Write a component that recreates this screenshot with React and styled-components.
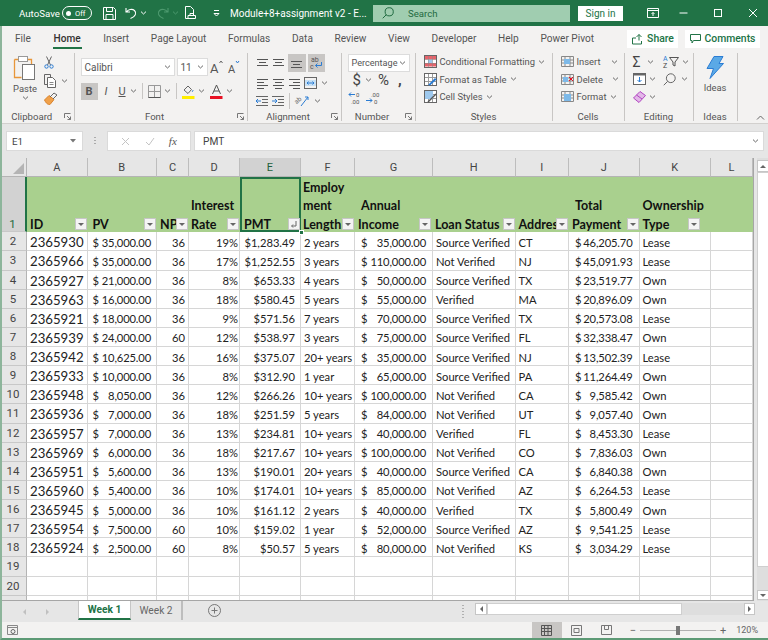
import styled, { createGlobalStyle } from "styled-components";

const Global = createGlobalStyle`
  html, body { margin: 0; padding: 0; background: #f3f2f1; }
  * { box-sizing: border-box; }
`;

const GREEN = "#217346";
const UI = `"Roboto", "Liberation Sans", sans-serif`;
const SHEET = `"Lato", "Liberation Sans", sans-serif`;

const Window = styled.div`
  width: 768px;
  height: 640px;
  overflow: hidden;
  display: flex;
  flex-direction: column;
  font-family: ${UI};
  color: #444;
  background: #f3f2f1;
`;
const TitleBar = styled.div`
  height: 26px;
  flex: none;
  background: ${GREEN};
  color: #fff;
  display: flex;
  align-items: center;
  font-size: 9.7px;
  padding-left: 19px;
`;
const Body = styled.div`
  flex: 1;
  min-height: 0;
  display: flex;
  flex-direction: column;
  border-left: 2px solid #8db59b;
  border-bottom: 2px solid #5d9a75;
`;
const AutoSave = styled.span`
  width: 43px;
`;
const Toggle = styled.div`
  width: 30px;
  height: 14px;
  border: 1px solid #fff;
  border-radius: 7px;
  display: flex;
  align-items: center;
  gap: 4px;
  padding-left: 3px;
  font-size: 7.5px;
  margin-right: 11px;
  &::before {
    content: "";
    width: 5px;
    height: 5px;
    border-radius: 50%;
    background: #fff;
  }
`;
const Quick = styled.div`
  display: flex;
  align-items: center;
  gap: ${(p) => p.$gap || 3}px;
  margin-right: ${(p) => p.$after || 0}px;
`;
const DocTitle = styled.span`
  width: 143px;
  white-space: nowrap;
  font-size: 10px;
`;
const SearchBox = styled.div`
  width: 197px;
  height: 17px;
  background: #a0cdb0;
  display: flex;
  align-items: center;
  gap: 14px;
  padding-left: 9px;
  color: #1f6a40;
  font-size: 9.6px;
  margin-right: 8px;
`;
const SignIn = styled.div`
  width: 45px;
  height: 15px;
  background: #fff;
  color: ${GREEN};
  font-size: 10px;
  display: flex;
  align-items: center;
  justify-content: center;
  margin-right: 24px;
`;
const WinControls = styled.div`
  display: flex;
  align-items: center;
  gap: 20px;
`;

const TabRow = styled.div`
  height: 25px;
  flex: none;
  display: flex;
  align-items: center;
  padding-left: 13px;
  gap: 21.7px;
  font-size: 10.1px;
  color: #555;
`;
const RibbonTab = styled.div`
  height: 25px;
  display: flex;
  align-items: center;
  white-space: nowrap;
  position: relative;
  ${(p) =>
    p.$active &&
    `color: #333; font-weight: 500; padding: 0 1px;
     &::after { content: ""; position: absolute; left: 0; right: 0; bottom: 2px; height: 2px; background: ${GREEN}; }`}
`;
const TabActions = styled.div`
  margin-left: auto;
  display: flex;
  gap: 7px;
  padding-right: 8px;
`;
const ActionBtn = styled.div`
  height: 18px;
  width: ${(p) => p.$w}px;
  background: #fff;
  color: ${GREEN};
  font-weight: 500;
  font-size: 10.4px;
  display: flex;
  align-items: center;
  justify-content: center;
  gap: 4px;
`;

const Ribbon = styled.div`
  height: 73px;
  flex: none;
  display: flex;
  border-bottom: 1px solid #d2d0ce;
  padding-top: 2px;
`;
const Group = styled.div`
  width: ${(p) => p.$w}px;
  flex: none;
  height: 68px;
  border-right: 1px solid #c8c6c4;
  display: flex;
  flex-direction: column;
`;
const GroupBody = styled.div`
  flex: 1;
  min-height: 0;
  padding-left: ${(p) => p.$pl || 0}px;
  display: flex;
  gap: ${(p) => p.$gap || 0}px;
`;
const GroupLabel = styled.div`
  height: 10px;
  display: grid;
  grid-template-columns: 1fr auto 1fr;
  align-items: center;
  font-size: 9.6px;
  color: #555;
  padding-right: ${(p) => (p.$launch ? 12 : 0)}px;
  & > span:nth-child(2) {
    white-space: nowrap;
  }
  & > svg {
    justify-self: end;
    margin-right: -9px;
  }
`;
const Stack = styled.div`
  display: flex;
  flex-direction: column;
  align-items: ${(p) => p.$items || "flex-start"};
  padding-top: ${(p) => p.$pt || 0}px;
  gap: ${(p) => p.$gap || 0}px;
  width: ${(p) => (p.$w ? `${p.$w}px` : "auto")};
`;
const CollapseSlot = styled.div`
  margin-left: 18px;
  padding-top: 62px;
`;
const IconRow = styled.div`
  display: flex;
  align-items: center;
  height: ${(p) => p.$h || 18}px;
  gap: ${(p) => p.$gap || 0}px;
`;
const RibbonText = styled.span`
  font-size: 9.4px;
  color: #555;
  white-space: nowrap;
`;
const Select = styled.div`
  width: ${(p) => p.$w}px;
  height: 18px;
  background: #fff;
  border: 1px solid #dcdcdc;
  display: flex;
  align-items: center;
  justify-content: space-between;
  padding: 0 3px;
  font-size: ${(p) => p.$size || 10}px;
  color: #555;
  white-space: nowrap;
`;
const ToolBtn = styled.div`
  width: ${(p) => p.$w || 17}px;
  height: ${(p) => p.$h || 17}px;
  display: flex;
  align-items: center;
  justify-content: center;
  flex: none;
  color: #555;
  background: ${(p) => (p.$on ? "#c8c6c4" : "transparent")};
`;
const Letter = styled.span`
  font-family: ${UI};
  font-size: 11px;
  font-weight: ${(p) => (p.$bold ? 700 : 400)};
  font-style: ${(p) => (p.$italic ? "italic" : "normal")};
  text-decoration: ${(p) => (p.$under ? "underline" : "none")};
  color: #555;
`;
const Sep = styled.div`
  width: 1px;
  height: 16px;
  background: #c8c6c4;
  margin: 0 ${(p) => (p.$m === undefined ? 5 : p.$m)}px;
`;
const Symbol = styled.span`
  font-size: ${(p) => p.$size || 15}px;
  font-weight: ${(p) => p.$weight || 400};
  margin-left: ${(p) => p.$ml || 0}px;
  color: #444;
  font-family: ${UI};
`;
const MenuItem = styled.div`
  display: flex;
  align-items: center;
  height: 17.5px;
  gap: 3px;
`;

const FormulaArea = styled.div`
  height: 34px;
  flex: none;
  background: #e6e6e6;
  display: flex;
  align-items: flex-start;
  padding: 7px 4px 0 4px;
`;
const NameBox = styled.div`
  width: 77px;
  height: 20px;
  background: #fff;
  border: 1px solid #dadada;
  display: flex;
  align-items: center;
  justify-content: space-between;
  padding: 0 6px 0 5px;
  font-size: 9.8px;
  color: #444;
`;
const GripDots = styled.div`
  width: 24px;
  height: 20px;
  display: flex;
  align-items: center;
  justify-content: center;
  &::before {
    content: "";
    width: 2px;
    height: 8px;
    background: repeating-linear-gradient(#aaa 0 1px, transparent 1px 3px);
  }
`;
const FxBox = styled.div`
  width: 84px;
  height: 20px;
  background: #fff;
  border: 1px solid #dadada;
  display: flex;
  align-items: center;
  justify-content: space-around;
  padding: 0 6px;
  margin-right: 3px;
`;
const FxText = styled.span`
  font-family: "Liberation Serif", serif;
  font-style: italic;
  font-size: 11px;
  color: #555;
`;
const FormulaInput = styled.div`
  flex: 1;
  height: 20px;
  background: #fff;
  border: 1px solid #dadada;
  display: flex;
  align-items: center;
  justify-content: space-between;
  padding: 0 4px 0 8px;
  font-size: 10.2px;
  color: #444;
`;

const SheetArea = styled.div`
  height: 443px;
  flex: none;
  display: flex;
  background: #e6e6e6;
`;
const SheetClip = styled.div`
  width: 752px;
  height: 443px;
  overflow: hidden;
  flex: none;
  background: #fff;
  border-right: 1px solid #a6a6a6;
  border-bottom: 1px solid #a6a6a6;
`;
const Grid = styled.div`
  display: grid;
  grid-template-columns: 25px 60.5px 69.5px 32px 51px 61px 54px 78px 82.5px 53.5px 70.5px 71.5px 42px;
  grid-template-rows: 19px 55.3px repeat(20, 19.125px);
  font-family: ${SHEET};
  font-size: 11.2px;
  color: #222;
`;
const Corner = styled.div`
  background: #e6e6e6;
  border-right: 1px solid #b4b4b4;
  border-bottom: 1px solid #b4b4b4;
  display: flex;
  align-items: flex-end;
  justify-content: flex-end;
  padding: 0 2px 2px 0;
  &::before {
    content: "";
    border-style: solid;
    border-width: 0 0 11px 11px;
    border-color: transparent transparent #b4b4b4 transparent;
  }
`;
const ColHead = styled.div`
  background: ${(p) => (p.$on ? "#d2d2d2" : "#e6e6e6")};
  border-right: 1px solid #bdbdbd;
  border-bottom: 1px solid #b4b4b4;
  color: ${(p) => (p.$on ? "#1e5f3b" : "#444")};
  display: flex;
  align-items: center;
  justify-content: center;
  font-family: ${UI};
  font-size: 11px;
`;
const RowHead = styled.div`
  background: ${(p) => (p.$on ? "#d2d2d2" : "#e6e6e6")};
  border-right: ${(p) => (p.$on ? `2px solid ${GREEN}` : "1px solid #b4b4b4")};
  border-bottom: 1px solid #c8c8c8;
  color: ${(p) => (p.$on ? "#1e6a40" : "#444")};
  display: flex;
  align-items: ${(p) => (p.$on ? "flex-end" : "center")};
  justify-content: center;
  padding-right: 2px;
  font-family: ${UI};
  font-size: 11.5px;
`;
const HeadCell = styled.div`
  background: #a9d08e;
  position: relative;
  display: flex;
  flex-direction: column;
  justify-content: flex-end;
  padding-left: ${(p) => (p.$pl === undefined ? 3 : p.$pl)}px;
  font-weight: 700;
  font-size: 12.5px;
  line-height: 18.4px;
  color: #111;
  overflow: hidden;
  white-space: nowrap;
  ${(p) => p.$selected && `box-shadow: inset 0 0 0 2px ${GREEN};`}
`;
const HeadLine = styled.span`
  padding-left: ${(p) => (p.$indent ? 3 : 0)}px;
  transform: translateY(2px);
`;
const FillHandle = styled.span`
  position: absolute;
  right: -3px;
  bottom: -3px;
  width: 5px;
  height: 5px;
  background: ${GREEN};
  border: 1px solid #fff;
  z-index: 2;
`;
const HeadWrap = styled.div`
  position: relative;
  display: grid;
`;
const FilterBtn = styled.span`
  position: absolute;
  right: ${(p) => p.$r || 1}px;
  bottom: 2px;
  width: 12px;
  height: 12px;
  background: #f4f4f4;
  border: 1px solid #c6c6c6;
  display: flex;
  align-items: center;
  justify-content: center;
`;
const Cell = styled.div`
  border-right: 1px solid #d6d6d6;
  border-bottom: 1px solid #d6d6d6;
  display: flex;
  align-items: center;
  white-space: nowrap;
  padding: ${(p) => (p.$pad ? `2px ${p.$pad} 0` : "2px 3px 0")};
  justify-content: ${(p) =>
    p.$kind === "num" ? "flex-end" : p.$kind === "money" ? "space-between" : "flex-start"};
  font-size: ${(p) => (p.$kind === "id" ? 13.2 : 11.2)}px;
`;
const Amount = styled.span`
  letter-spacing: -0.15px;
`;

const VScroll = styled.div`
  width: 12px;
  margin-left: 3px;
  flex: none;
  display: flex;
  flex-direction: column;
  background: #dedede;
`;
const ScrollBtn = styled.div`
  height: ${(p) => p.$h || 11}px;
  width: ${(p) => p.$w || "100%"};
  background: #fff;
  border: 1px solid #c6c6c6;
  flex: none;
  display: flex;
  align-items: center;
  justify-content: center;
  margin-top: ${(p) => p.$mt || 0}px;
  margin-left: ${(p) => (p.$end ? "auto" : 0)};
`;
const VThumb = styled.div`
  height: 395px;
  background: #fff;
  border: 1px solid #cfcfcf;
`;

const SheetBar = styled.div`
  height: 21px;
  flex: none;
  background: #e6e6e6;
  display: flex;
  align-items: flex-start;
`;
const SheetNav = styled.div`
  width: 76px;
  height: 21px;
  display: flex;
  align-items: center;
  gap: 18px;
  padding-left: 20px;
`;
const SheetTab = styled.div`
  width: ${(p) => p.$w}px;
  height: 19px;
  font-size: 10.2px;
  display: flex;
  align-items: center;
  justify-content: center;
  color: ${(p) => (p.$active ? GREEN : "#666")};
  font-weight: ${(p) => (p.$active ? 700 : 400)};
  background: ${(p) => (p.$active ? "#fff" : "transparent")};
  border-left: ${(p) => (p.$active ? "1px solid #c6c6c6" : "none")};
  border-right: ${(p) => (p.$active ? "1px solid #c6c6c6" : "2px solid #bdbdbd")};
  border-bottom: ${(p) => (p.$active ? `2px solid ${GREEN}` : "none")};
`;
const AddSheet = styled.div`
  margin: 3px 0 0 25px;
  display: flex;
`;
const HDots = styled.div`
  margin: 4px 0 0 auto;
  width: 2px;
  height: 13px;
  background: repeating-linear-gradient(#b0b0b0 0 1px, transparent 1px 3px);
`;
const HScroll = styled.div`
  margin: 2px 13px 0 11px;
  width: 280px;
  height: 12px;
  display: flex;
  background: #dedede;
`;
const HThumb = styled.div`
  width: 195px;
  background: #fff;
  border: 1px solid #cfcfcf;
`;
const StatusBar = styled.div`
  height: 16px;
  flex: none;
  background: #f3f2f1;
  display: flex;
  align-items: center;
  padding-left: 5px;
`;
const ViewBtns = styled.div`
  margin-left: auto;
  display: flex;
  align-items: center;
  height: 16px;
`;
const ViewBtn = styled.div`
  width: 30px;
  height: 16px;
  display: flex;
  align-items: center;
  justify-content: center;
  background: ${(p) => (p.$on ? "#c8c6c4" : "transparent")};
`;
const Zoomer = styled.div`
  display: flex;
  align-items: center;
  gap: 4px;
  margin-left: 8px;
  color: #666;
  font-size: 11px;
`;
const SliderTrack = styled.div`
  width: 76px;
  height: 1px;
  background: #b0b0b0;
  display: flex;
  justify-content: center;
  align-items: center;
  &::before {
    content: "";
    width: 4px;
    height: 9px;
    background: #777;
  }
`;
const ZoomText = styled.span`
  font-size: 9px;
  color: #666;
  margin: 0 10px 0 6px;
`;
const IconSvg = styled.svg`
  display: block;
  flex: none;
  overflow: visible;
  margin-left: ${(p) => p.$ml || 0}px;
`;

/* little drawings */
const Svg = ({ w = 12, h = 12, ml = 0, children }) => (
  <IconSvg width={w} height={h} viewBox={`0 0 ${w} ${h}`} fill="none" $ml={ml}>
    {children}
  </IconSvg>
);
const Caret = ({ c = "#666", ml = 0 }) => (
  <Svg w={7} h={4} ml={ml}>
    <path d="M1 .6 3.5 3 6 .6" stroke={c} />
  </Svg>
);
const Launcher = () => (
  <Svg w={7} h={7}>
    <path d="M.5 5V.5H6.5M6.5 6.5 3 3M6.5 3.5v3h-3" stroke="#777" />
  </Svg>
);
const Lines = ({ ys, xs, c = "#555" }) => (
  <Svg w={14} h={12}>
    {ys.map((y, i) => (
      <path key={i} d={`M${xs[i][0]} ${y}.5H${xs[i][1]}`} stroke={c} />
    ))}
  </Svg>
);
const PasteIcon = () => (
  <Svg w={24} h={26}>
    <path d="M1.5 4.5h4M14.5 4.5h4v5M1.5 4.5v18h7" stroke="#e8963a" strokeWidth="1.3" />
    <rect x="5.5" y="1.5" width="9" height="5" fill="#fff" stroke="#999" />
    <rect x="9.5" y="9.5" width="12" height="15" fill="#fff" stroke="#777" />
  </Svg>
);
const CutIcon = () => (
  <Svg w={10} h={13}>
    <path d="M2.5 .5 6.5 9M7.5 .5 3.5 9" stroke="#666" />
    <circle cx="2.5" cy="10.5" r="1.7" stroke="#2b7cd3" />
    <circle cx="7.5" cy="10.5" r="1.7" stroke="#2b7cd3" />
  </Svg>
);
const CopyIcon = () => (
  <Svg w={13} h={14}>
    <path d="M3.5 10.5h-3v-10h6v3" stroke="#666" />
    <path d="M3.5 3.5h5l3 3v7h-8z" fill="#fff" stroke="#666" />
    <path d="M5.5 8.5h4M5.5 10.5h4" stroke="#888" />
  </Svg>
);
const BrushIcon = () => (
  <Svg w={14} h={13}>
    <path d="M.5 8 5 3.5l5 4L6 12.5c-2 0-3.5-.5-5.5-4.500z" fill="#f0a14a" stroke="#d9822b" />
    <path d="m6 5 4-4 3 2-4 4" stroke="#666" />
  </Svg>
);
const GrowA = ({ up }) => (
  <Svg w={13} h={14}>
    <text x="0" y="13" fontSize={up ? 13 : 11} fill="#555" fontFamily="Roboto">A</text>
    <path d={up ? "M9.500 3 11 1l1.500 2" : "M8 1l1.500 2L11 1"} stroke={up ? "#666" : "#2b7cd3"} />
  </Svg>
);
const BordersIcon = () => (
  <Svg w={13} h={13}>
    <path d="M.5.5h12v12H.5zM6.500.5v12M.5 6.500h12" stroke="#999" />
    <path d="M.5 12.500h12" stroke="#555" />
  </Svg>
);
const FillIcon = () => (
  <Svg w={13} h={15}>
    <path d="m2 6 4-4 3.500 3.500-3.500 4z" stroke="#666" />
    <path d="M11 6c0 1-1 2-1 2" stroke="#2b7cd3" />
    <rect x="0" y="12" width="12.500" height="3" fill="#ffee00" />
  </Svg>
);
const ColorIcon = () => (
  <Svg w={13} h={15}>
    <path d="m2.500 10 4-9 4 9M4 7h5" stroke="#555" />
    <rect x="0" y="12" width="12.500" height="3" fill="#e81123" />
  </Svg>
);
const WrapIcon = () => (
  <Svg w={14} h={14}>
    <text x="2" y="6" fontSize="7" fill="#555" fontFamily="Roboto">ab</text>
    <text x="1" y="13" fontSize="7" fill="#555" fontFamily="Roboto">c</text>
    <path d="M12.500 6v3.500H6.500M8.500 7.500 6.500 9.500l2 2" stroke="#2b7cd3" />
  </Svg>
);
const MergeIcon = () => (
  <Svg w={13} h={12}>
    <rect x=".5" y=".5" width="12" height="11" stroke="#666" />
    <rect x="1" y="3" width="11" height="6" fill="#c7e0f4" />
    <path d="M3 6h7M3 6l1.500-1.500M3 6l1.500 1.500M10 6 8.500 4.500M10 6 8.500 7.500" stroke="#2b7cd3" />
  </Svg>
);
const IndentIcon = ({ flip }) => (
  <Svg w={12} h={10}>
    <path d="M0 .5h12M6 3.500h6M6 6.500h6M0 9.500h12" stroke="#666" />
    <path d={flip ? "M0 5h5M3 3l2 2-2 2" : "M0 5h5M2 3 0 5l2 2"} stroke="#2b7cd3" />
  </Svg>
);
const OrientIcon = () => (
  <Svg w={15} h={13}>
    <text x="0" y="8" fontSize="6.5" fill="#666" fontFamily="Roboto" transform="rotate(-40 4 7)">ab</text>
    <path d="M6 12 13 3M10 3h3v3" stroke="#2b7cd3" />
  </Svg>
);
const DecIcon = ({ more }) => (
  <Svg w={13} h={13}>
    {more ? (
      <>
        <text x="5" y="5.5" fontSize="6" fill="#555" fontFamily="Roboto">.00</text>
        <text x="8" y="12.5" fontSize="6" fill="#555" fontFamily="Roboto">0</text>
        <path d="M0 9.500h6M4 7.500l2 2-2 2" stroke="#2b7cd3" />
      </>
    ) : (
      <>
        <text x="8" y="5.5" fontSize="6" fill="#555" fontFamily="Roboto">0</text>
        <text x="3" y="12.5" fontSize="6" fill="#555" fontFamily="Roboto">.00</text>
        <path d="M1 3.500h6M3 1.500l-2 2 2 2" stroke="#2b7cd3" />
      </>
    )}
  </Svg>
);
const TableIcon = ({ variant }) => (
  <Svg w={13} h={13}>
    <rect x=".5" y=".5" width="12" height="12" fill="#fff" stroke="#666" />
    {variant === "cond" && (
      <>
        <rect x="1" y="1" width="11" height="3.5" fill="#e8636b" />
        <rect x="1" y="8" width="11" height="3.5" fill="#e8636b" />
        <rect x="4" y="4.5" width="4.5" height="3.5" fill="#9ec9ee" />
        <path d="M4.500 1v11M8.500 1v11M1 4.500h11M1 8.500h11" stroke="#888" strokeWidth=".5" />
      </>
    )}
    {variant !== "cond" && <path d="M1 4.500h11M1 8.500h11M4.500 1v11M8.500 1v11" stroke="#9a9a9a" />}
    {variant === "fmt" && <path d="m4 12 7-7 1.500 1.500L6 12.500z" fill="#2b7cd3" />}
    {variant === "style" && <path d="M1 1h8v8H1z" fill="#9ec9ee" />}
    {variant === "style" && <path d="m4 12 8-8" stroke="#555" strokeWidth="1.5" />}
  </Svg>
);
const CellOpIcon = ({ op }) => (
  <Svg w={13} h={13}>
    <path d="M.5 1.500h12v10H.5zM.5 5h12M.5 8h12M4 1.500v10M9 1.500v10" stroke="#888" />
    {op === "insert" && <rect x="3" y="4" width="6" height="5" fill="#7db9e8" />}
    {op === "delete" && (
      <>
        <rect x="2" y="4" width="5" height="5" fill="#7db9e8" />
        <path d="m8 4 4 4M12 4 8 8" stroke="#e81123" />
      </>
    )}
    {op === "format" && <rect x="3" y="4" width="7" height="7" fill="#7db9e8" />}
  </Svg>
);
const SortIcon = () => (
  <Svg w={16} h={13}>
    <text x="0" y="6" fontSize="7" fill="#2b7cd3" fontFamily="Roboto">A</text>
    <text x="0" y="13" fontSize="7" fill="#444" fontFamily="Roboto">Z</text>
    <path d="M6.500 2.500h9l-3.500 4.500v4l-2-1V7z" stroke="#555" />
  </Svg>
);
const DownFill = () => (
  <Svg w={13} h={12}>
    <rect x=".5" y=".5" width="12" height="11" fill="#fff" stroke="#666" />
    <path d="M1 1.500h11" stroke="#666" strokeWidth="2" />
    <path d="M6.500 4v5M4.500 7l2 2 2-2" stroke="#2b7cd3" />
  </Svg>
);
const Magnifier = ({ c = "#666", s = 13 }) => (
  <Svg w={s} h={s}>
    <circle cx={s * 0.6} cy={s * 0.4} r={s * 0.34} stroke={c} />
    <path d={`M${s * 0.36} ${s * 0.64}l-${s * 0.3} ${s * 0.3}`} stroke={c} />
  </Svg>
);
const Eraser = () => (
  <Svg w={13} h={12}>
    <path d="M.5 7 7 .5l5.500 4L6 11.500z" fill="#e3b7e8" stroke="#b146c2" />
    <path d="M3.500 4 9 8" stroke="#b146c2" />
  </Svg>
);
const Bolt = () => (
  <Svg w={18} h={23}>
    <path d="M8 .5h9l-4 7h4.500L4 22.500l3.500-10H1z" fill="#5aa9e6" stroke="#2b7cd3" />
  </Svg>
);
const ChevronUp = () => (
  <Svg w={9} h={5}>
    <path d="M1 4.500 4.500 1 8 4.500" stroke="#666" />
  </Svg>
);
const ShareIcon = () => (
  <Svg w={12} h={12}>
    <path d="M8 1.500v6M5.500 4 8 1.500 10.500 4M5 5H1.500v6h9V8" stroke="#217346" />
  </Svg>
);
const CommentIcon = () => (
  <Svg w={11} h={10}>
    <path d="M.5.500h10v6h-7L2 9V6.500H.5z" stroke="#217346" />
  </Svg>
);

const tabs = ["File", "Home", "Insert", "Page Layout", "Formulas", "Data", "Review", "View", "Developer", "Help", "Power Pivot"];
const cols = ["A", "B", "C", "D", "E", "F", "G", "H", "I", "J", "K", "L"];
const heads = [
  { lines: ["ID"] },
  { lines: ["PV"], pl: 5 },
  { lines: ["NP"], pl: 3 },
  { lines: ["Interest", "Rate"], pl: 2 },
  { lines: ["PMT"], pl: 4, sel: true },
  { lines: ["Employ", "ment", "Length"], pl: 2 },
  { lines: ["Annual", "Income"], pl: 3, r: 2, indent: "Annual" },
  { lines: ["Loan Status"], pl: 2 },
  { lines: ["Address"], pl: 3 },
  { lines: ["Total", "Payment"], pl: 3, indent: "Total" },
  { lines: ["Ownership", "Type"], pl: 3, r: 11 },
  { empty: true },
];
const rows = [
  ["2365930", "35,000.00", 36, "19%", "1,283.49", "2 years", "35,000.00", "Source Verified", "CT", "46,205.70", "Lease"],
  ["2365966", "35,000.00", 36, "17%", "1,252.55", "3 years", "110,000.00", "Not Verified", "NJ", "45,091.93", "Lease"],
  ["2365927", "21,000.00", 36, "8%", "653.33", "4 years", "50,000.00", "Source Verified", "TX", "23,519.77", "Own"],
  ["2365963", "16,000.00", 36, "18%", "580.45", "5 years", "55,000.00", "Verified", "MA", "20,896.09", "Own"],
  ["2365921", "18,000.00", 36, "9%", "571.56", "7 years", "70,000.00", "Source Verified", "TX", "20,573.08", "Lease"],
  ["2365939", "24,000.00", 60, "12%", "538.97", "3 years", "75,000.00", "Source Verified", "FL", "32,338.47", "Own"],
  ["2365942", "10,625.00", 36, "16%", "375.07", "20+ years", "35,000.00", "Source Verified", "NJ", "13,502.39", "Lease"],
  ["2365933", "10,000.00", 36, "8%", "312.90", "1 year", "65,000.00", "Source Verified", "PA", "11,264.49", "Own"],
  ["2365948", "8,050.00", 36, "12%", "266.26", "10+ years", "100,000.00", "Not Verified", "CA", "9,585.42", "Own"],
  ["2365936", "7,000.00", 36, "18%", "251.59", "5 years", "84,000.00", "Not Verified", "UT", "9,057.40", "Own"],
  ["2365957", "7,000.00", 36, "13%", "234.81", "10+ years", "40,000.00", "Verified", "FL", "8,453.30", "Lease"],
  ["2365969", "6,000.00", 36, "18%", "217.67", "10+ years", "100,000.00", "Not Verified", "CO", "7,836.03", "Own"],
  ["2365951", "5,600.00", 36, "13%", "190.01", "20+ years", "40,000.00", "Source Verified", "CA", "6,840.38", "Own"],
  ["2365960", "5,400.00", 36, "10%", "174.01", "10+ years", "85,000.00", "Not Verified", "AZ", "6,264.53", "Lease"],
  ["2365945", "5,000.00", 36, "10%", "161.12", "2 years", "40,000.00", "Verified", "TX", "5,800.49", "Own"],
  ["2365954", "7,500.00", 60, "10%", "159.02", "1 year", "52,000.00", "Source Verified", "AZ", "9,541.25", "Lease"],
  ["2365924", "2,500.00", 60, "8%", "50.57", "5 years", "80,000.00", "Not Verified", "KS", "3,034.29", "Lease"],
];

const DataRow = ({ n, r }) => (
  <>
    <RowHead>{n}</RowHead>
    <Cell $kind="id">{r[0]}</Cell>
    <Cell $kind="money" $pad="5px">
      <span>$</span>
      <Amount>{r[1]}</Amount>
    </Cell>
    <Cell $kind="num">{r[2]}</Cell>
    <Cell $kind="num" $pad="1px">{r[3]}</Cell>
    <Cell $kind="num" $pad="5px">${r[4]}</Cell>
    <Cell>{r[5]}</Cell>
    <Cell $kind="money" $pad="6px">
      <span>$</span>
      <Amount>{r[6]}</Amount>
    </Cell>
    <Cell>{r[7]}</Cell>
    <Cell>{r[8]}</Cell>
    <Cell $kind="money" $pad="6px">
      <span>$</span>
      <Amount>{r[9]}</Amount>
    </Cell>
    <Cell>{r[10]}</Cell>
    <Cell />
  </>
);

const EmptyRow = ({ n }) => (
  <>
    <RowHead>{n}</RowHead>
    {cols.map((c) => (
      <Cell key={c} />
    ))}
  </>
);

export default function App() {
  return (
    <Window>
      <Global />
      <TitleBar>
        <AutoSave>AutoSave</AutoSave>
        <Toggle>Off</Toggle>
        <Quick $after={9}>
          <Svg w={13} h={13}>
            <path d="M.5.5h10l2 2v10H.5z" stroke="#fff" />
            <path d="M3.500.5v4h6v-4M3 12.500v-5h7v5" stroke="#fff" />
          </Svg>
        </Quick>
        <Quick $after={10}>
          <Svg w={12} h={12}>
            <path d="M1 1v4h4M1.500 5C3 2.500 7 1.500 9.500 3.500c2.500 2.500 1 6-4 8" stroke="#fff" strokeWidth="1.1" />
          </Svg>
          <Caret c="#fff" />
        </Quick>
        <Quick $after={6}>
          <Svg w={12} h={12}>
            <path d="M11 1v4H7M10.500 5C9 2.500 5 1.500 2.500 3.500c-2.500 2.500-1 6 4 8" stroke="#4d9a6f" strokeWidth="1.1" />
          </Svg>
          <Caret c="#4d9a6f" />
        </Quick>
        <Quick $after={17}>
          <Svg w={11} h={14}>
            <path d="M.5.500h5l3 3V8M.5.500v12h3M3 9.500h7.500v3H3zM5 9.500v-2h3.500v2" stroke="#fff" />
          </Svg>
        </Quick>
        <Quick $after={10}>
          <Svg w={7} h={7}>
            <path d="M1 .5h5M1 3.500h5l-2.500 2.500z" stroke="#fff" />
          </Svg>
        </Quick>
        <DocTitle>Module+8+assignment v2 - E...</DocTitle>
        <SearchBox>
          <Magnifier c="#1f6a40" s={12} />
          <span>Search</span>
        </SearchBox>
        <SignIn>Sign in</SignIn>
        <WinControls>
          <Svg w={12} h={10}>
            <path d="M.5.500h11v9H.5zM.5 2.500h11M6 8V4.500M4.500 6 6 4.500 7.500 6" stroke="#fff" />
          </Svg>
          <Svg w={9} h={10}>
            <path d="M.5 5h8" stroke="#fff" />
          </Svg>
          <Svg w={14} h={10} ml={3}>
            <rect x="3.5" y="1.5" width="7" height="7" stroke="#fff" />
          </Svg>
          <Svg w={10} h={10} ml={3}>
            <path d="m1 1 8 8M9 1 1 9" stroke="#fff" />
          </Svg>
        </WinControls>
      </TitleBar>
      <Body>
        <TabRow>
          {tabs.map((t) => (
            <RibbonTab key={t} $active={t === "Home"}>
              {t}
            </RibbonTab>
          ))}
          <TabActions>
            <ActionBtn $w={51}>
              <ShareIcon />
              Share
            </ActionBtn>
            <ActionBtn $w={75}>
              <CommentIcon />
              Comments
            </ActionBtn>
          </TabActions>
        </TabRow>
        <Ribbon>
          <Group $w={72.5}>
            <GroupBody $pl={10} $gap={6}>
              <Stack $items="center" $gap={2} $pt={2} $w={26}>
                <PasteIcon />
                <RibbonText>Paste</RibbonText>
                <Caret />
              </Stack>
              <Stack>
                <IconRow $h={18}>
                  <CutIcon />
                </IconRow>
                <IconRow $h={19} $gap={4}>
                  <CopyIcon />
                  <Caret />
                </IconRow>
                <IconRow $h={17}>
                  <BrushIcon />
                </IconRow>
              </Stack>
            </GroupBody>
            <GroupLabel $launch>
              <span />
              <span>Clipboard</span>
              <Launcher />
            </GroupLabel>
          </Group>
          <Group $w={173}>
            <GroupBody $pl={6}>
              <Stack $gap={6} $pt={5}>
                <IconRow $gap={2}>
                  <Select $w={94}>
                    Calibri
                    <Caret />
                  </Select>
                  <Select $w={31}>
                    11
                    <Caret />
                  </Select>
                  <IconRow $gap={5}>
                    <GrowA up />
                    <GrowA />
                  </IconRow>
                </IconRow>
                <IconRow>
                  <ToolBtn $on>
                    <Letter $bold>B</Letter>
                  </ToolBtn>
                  <ToolBtn>
                    <Letter $italic>I</Letter>
                  </ToolBtn>
                  <ToolBtn $w={15}>
                    <Letter $under>U</Letter>
                  </ToolBtn>
                  <Caret />
                  <Sep />
                  <BordersIcon />
                  <Caret ml={3} />
                  <Sep />
                  <FillIcon />
                  <Caret ml={3} />
                  <Svg w={5} h={2} />
                  <ColorIcon />
                  <Caret ml={3} />
                </IconRow>
              </Stack>
            </GroupBody>
            <GroupLabel $launch>
              <span />
              <span>Font</span>
              <Launcher />
            </GroupLabel>
          </Group>
          <Group $w={94}>
            <GroupBody $pl={8}>
              <Stack>
                <IconRow $gap={2} $h={20}>
                  <Lines ys={[2, 5, 8]} xs={[[1, 12], [3, 10], [1, 12]]} />
                  <Lines ys={[2, 5, 8]} xs={[[1, 12], [3, 10], [1, 12]]} />
                  <ToolBtn $on $w={18} $h={18}>
                    <Lines ys={[4, 7, 10]} xs={[[1, 12], [3, 10], [1, 12]]} />
                  </ToolBtn>
                  <ToolBtn $on $w={17} $h={18}>
                    <WrapIcon />
                  </ToolBtn>
                </IconRow>
                <IconRow $gap={2} $h={19}>
                  <Lines ys={[2, 5, 8, 11]} xs={[[1, 12], [1, 8], [1, 12], [1, 8]]} />
                  <Lines ys={[2, 5, 8, 11]} xs={[[1, 12], [3, 10], [1, 12], [3, 10]]} />
                  <Lines ys={[2, 5, 8, 11]} xs={[[1, 12], [5, 12], [1, 12], [5, 12]]} />
                  <MergeIcon />
                  <Caret ml={2} />
                </IconRow>
                <IconRow $gap={4} $h={17}>
                  <IndentIcon />
                  <IndentIcon flip />
                  <Sep $m={1} />
                  <OrientIcon />
                  <Caret />
                </IconRow>
              </Stack>
            </GroupBody>
            <GroupLabel $launch>
              <span />
              <span>Alignment</span>
              <Launcher />
            </GroupLabel>
          </Group>
          <Group $w={74}>
            <GroupBody $pl={6}>
              <Stack $pt={1}>
                <Select $w={62} $size={9.1}>
                  Percentage
                  <Caret />
                </Select>
                <IconRow $h={15} $gap={4}>
                  <Symbol $ml={5}>$</Symbol>
                  <Caret />
                  <Symbol $ml={2}>%</Symbol>
                  <Symbol $ml={5} $weight={700}>,</Symbol>
                </IconRow>
                <IconRow $h={20} $gap={5}>
                  <DecIcon />
                  <DecIcon more />
                </IconRow>
              </Stack>
            </GroupBody>
            <GroupLabel $launch>
              <span />
              <span>Number</span>
              <Launcher />
            </GroupLabel>
          </Group>
          <Group $w={137}>
            <GroupBody $pl={8}>
              <Stack>
                <MenuItem>
                  <TableIcon variant="cond" />
                  <RibbonText>Conditional Formatting</RibbonText>
                  <Caret />
                </MenuItem>
                <MenuItem>
                  <TableIcon variant="fmt" />
                  <RibbonText>Format as Table</RibbonText>
                  <Caret />
                </MenuItem>
                <MenuItem>
                  <TableIcon variant="style" />
                  <RibbonText>Cell Styles</RibbonText>
                  <Caret />
                </MenuItem>
              </Stack>
            </GroupBody>
            <GroupLabel>
              <span />
              <span>Styles</span>
              <span />
            </GroupLabel>
          </Group>
          <Group $w={72}>
            <GroupBody $pl={8}>
              <Stack>
                <MenuItem>
                  <CellOpIcon op="insert" />
                  <RibbonText>Insert</RibbonText>
                  <Caret ml={7} />
                </MenuItem>
                <MenuItem>
                  <CellOpIcon op="delete" />
                  <RibbonText>Delete</RibbonText>
                  <Caret ml={6} />
                </MenuItem>
                <MenuItem>
                  <CellOpIcon op="format" />
                  <RibbonText>Format</RibbonText>
                  <Caret />
                </MenuItem>
              </Stack>
            </GroupBody>
            <GroupLabel>
              <span />
              <span>Cells</span>
              <span />
            </GroupLabel>
          </Group>
          <Group $w={69}>
            <GroupBody $pl={8} $gap={7}>
              <Stack>
                <MenuItem>
                  <Symbol $size={14}>Σ</Symbol>
                  <Caret ml={3} />
                </MenuItem>
                <MenuItem>
                  <DownFill />
                  <Caret />
                </MenuItem>
                <MenuItem>
                  <Eraser />
                  <Caret />
                </MenuItem>
              </Stack>
              <Stack>
                <MenuItem>
                  <SortIcon />
                  <Caret />
                </MenuItem>
                <MenuItem>
                  <Magnifier />
                  <Caret ml={2} />
                </MenuItem>
              </Stack>
            </GroupBody>
            <GroupLabel>
              <span />
              <span>Editing</span>
              <span />
            </GroupLabel>
          </Group>
          <Group $w={44}>
            <GroupBody>
              <Stack $items="center" $gap={3} $pt={3} $w={43}>
                <Bolt />
                <RibbonText>Ideas</RibbonText>
              </Stack>
            </GroupBody>
            <GroupLabel>
              <span />
              <span>Ideas</span>
              <span />
            </GroupLabel>
          </Group>
          <CollapseSlot>
            <ChevronUp />
          </CollapseSlot>
        </Ribbon>
        <FormulaArea>
          <NameBox>
            E1
            <Svg w={6} h={4}>
              <path d="M0 0h6L3 3.500z" fill="#777" />
            </Svg>
          </NameBox>
          <GripDots />
          <FxBox>
            <Svg w={9} h={9}>
              <path d="m1 1 7 7M8 1 1 8" stroke="#c4c4c4" />
            </Svg>
            <Svg w={10} h={9}>
              <path d="m1 5 3 3 5-7" stroke="#c4c4c4" />
            </Svg>
            <FxText>fx</FxText>
          </FxBox>
          <FormulaInput>
            PMT
            <Caret />
          </FormulaInput>
        </FormulaArea>
        <SheetArea>
          <SheetClip>
            <Grid>
              <Corner />
              {cols.map((c) => (
                <ColHead key={c} $on={c === "E"}>
                  {c}
                </ColHead>
              ))}
              <RowHead $on>1</RowHead>
              {heads.map((h, i) => (
                <HeadWrap key={i}>
                  <HeadCell $pl={h.pl} $selected={h.sel}>
                    {h.lines &&
                      h.lines.map((l) => (
                        <HeadLine key={l} $indent={h.indent === l}>
                          {l}
                        </HeadLine>
                      ))}
                  </HeadCell>
                  {!h.empty && (
                    <FilterBtn $r={h.r}>
                      {h.sel ? (
                        <Svg w={8} h={8}>
                          <path d="M6 1v5H2M3 4.500 1.500 6 3 7.500" stroke="#666" />
                        </Svg>
                      ) : (
                        <Svg w={6} h={3}>
                          <path d="M0 0h6L3 3z" fill="#666" />
                        </Svg>
                      )}
                    </FilterBtn>
                  )}
                  {h.sel && <FillHandle />}
                </HeadWrap>
              ))}
              {rows.map((r, i) => (
                <DataRow key={r[0]} n={i + 2} r={r} />
              ))}
              <EmptyRow n={19} />
              <EmptyRow n={20} />
              <EmptyRow n={21} />
            </Grid>
          </SheetClip>
          <VScroll>
            <ScrollBtn $h={12} $mt={2}>
              <Svg w={6} h={3}>
                <path d="M0 3h6L3 0z" fill="#666" />
              </Svg>
            </ScrollBtn>
            <VThumb />
            <ScrollBtn $h={10} $mt={23}>
              <Svg w={6} h={3}>
                <path d="M0 0h6L3 3z" fill="#666" />
              </Svg>
            </ScrollBtn>
          </VScroll>
        </SheetArea>
        <SheetBar>
          <SheetNav>
            <Svg w={5} h={6}>
              <path d="M4 0v6L1 3z" fill="#c0c0c0" />
            </Svg>
            <Svg w={5} h={6}>
              <path d="M1 0v6l3-3z" fill="#c0c0c0" />
            </Svg>
          </SheetNav>
          <SheetTab $w={53} $active>
            Week 1
          </SheetTab>
          <SheetTab $w={52}>Week 2</SheetTab>
          <AddSheet>
            <Svg w={13} h={13}>
              <circle cx="6.5" cy="6.5" r="6" stroke="#777" />
              <path d="M6.500 3.500v6M3.500 6.500h6" stroke="#777" />
            </Svg>
          </AddSheet>
          <HDots />
          <HScroll>
            <ScrollBtn $h={12} $w="12px">
              <Svg w={3} h={6}>
                <path d="M3 0v6L0 3z" fill="#666" />
              </Svg>
            </ScrollBtn>
            <HThumb />
            <ScrollBtn $h={12} $w="11px" $end>
              <Svg w={3} h={6}>
                <path d="M0 0v6l3-3z" fill="#666" />
              </Svg>
            </ScrollBtn>
          </HScroll>
        </SheetBar>
        <StatusBar>
          <Svg w={12} h={11}>
            <path d="M.5.500h10v9H.5zM.5 2.500h10" stroke="#888" />
            <circle cx="6" cy="6.5" r="2" stroke="#666" />
          </Svg>
          <ViewBtns>
            <ViewBtn $on>
              <Svg w={11} h={11}>
                <path d="M.5.500h10v10H.5zM.5 3.500h10M.5 6.500h10M3.500.5v10M7 .5v10" stroke="#555" />
              </Svg>
            </ViewBtn>
            <ViewBtn>
              <Svg w={11} h={11}>
                <path d="M.5.500h10v10H.5zM3 3.500h5v4H3z" stroke="#777" />
              </Svg>
            </ViewBtn>
            <ViewBtn>
              <Svg w={11} h={11}>
                <path d="M.5.500h10v9H.5zM3.500.5v4h4v-4" stroke="#777" />
              </Svg>
            </ViewBtn>
            <Zoomer>
              −
              <SliderTrack />
              +
              <ZoomText>120%</ZoomText>
            </Zoomer>
          </ViewBtns>
        </StatusBar>
      </Body>
    </Window>
  );
}
